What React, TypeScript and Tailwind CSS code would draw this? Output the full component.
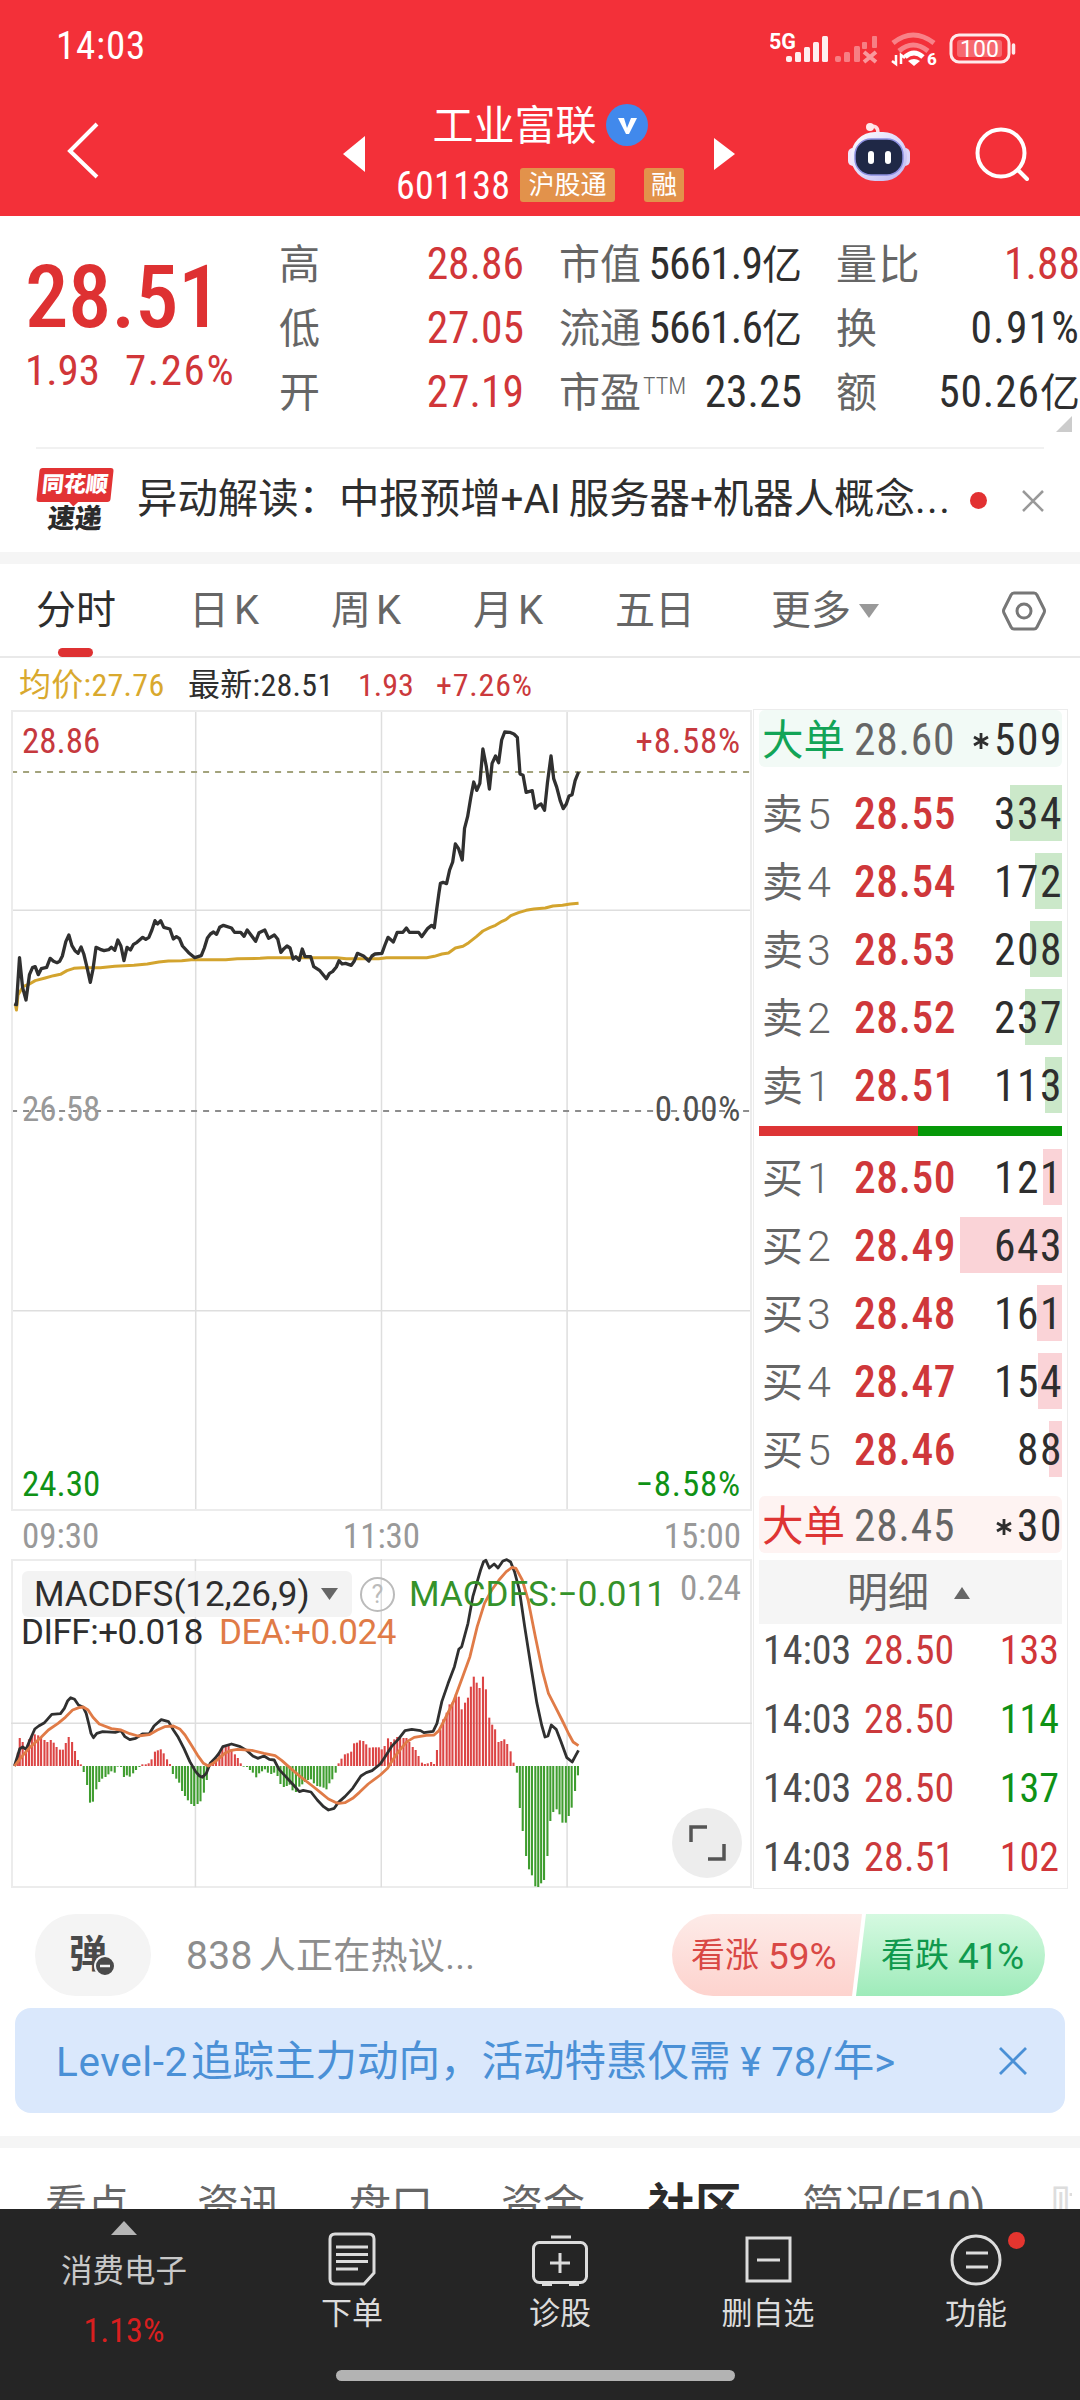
import { type ReactNode } from 'react';
import clsx from 'clsx';

type Tone = 'red' | 'green' | 'dark';

const toneClass: Record<Tone, string> = {
  red: 'text-[#d13639]',
  green: 'text-[#0f9216]',
  dark: 'text-[#2e2e2e]',
};

interface Level {
  label: string;
  price: string;
  volume: number;
  bar: number;
}

const sells: Level[] = [
  { label: '卖5', price: '28.55', volume: 334, bar: 52 },
  { label: '卖4', price: '28.54', volume: 172, bar: 27 },
  { label: '卖3', price: '28.53', volume: 208, bar: 32 },
  { label: '卖2', price: '28.52', volume: 237, bar: 37 },
  { label: '卖1', price: '28.51', volume: 113, bar: 17 },
];

const buys: Level[] = [
  { label: '买1', price: '28.50', volume: 121, bar: 19 },
  { label: '买2', price: '28.49', volume: 643, bar: 102 },
  { label: '买3', price: '28.48', volume: 161, bar: 25 },
  { label: '买4', price: '28.47', volume: 154, bar: 24 },
  { label: '买5', price: '28.46', volume: 88, bar: 13 },
];

const ticks: { price: string; volume: number; tone: Tone }[] = [
  { price: '28.50', volume: 133, tone: 'red' },
  { price: '28.50', volume: 114, tone: 'green' },
  { price: '28.50', volume: 137, tone: 'green' },
  { price: '28.51', volume: 102, tone: 'red' },
];

const priceLine =
  '37,912 43,914 51,773 59,862 68,900 77,824 85,803 92,800 100,824 108,806 122,802 131,775 140,784 149,788 156,784 163,768 172,725 180,705 188,737 196,752 204,760 212,741 219,762 227,800 236,847 243,808 251,742 262,748 272,752 284,749 291,742 300,751 308,720 316,738 324,782 332,742 341,750 349,733 358,727 373,712 381,718 389,712 397,690 405,662 412,672 420,662 428,682 444,687 453,717 461,710 469,716 477,738 493,758 509,773 526,767 534,744 542,714 550,702 558,696 566,703 574,682 584,676 605,684 613,697 629,697 638,709 646,690 654,702 668,724 677,698 692,690 702,715 717,705 726,718 734,757 742,746 750,738 758,744 766,777 773,770 782,781 790,747 797,770 812,770 820,800 836,812 853,836 861,820 869,815 879,801 886,782 894,792 903,790 918,796 926,783 934,760 950,768 964,783 972,768 980,762 998,760 1006,735 1014,712 1028,726 1038,697 1053,697 1062,684 1070,697 1094,697 1102,710 1118,685 1128,676 1135,683 1141,630 1147,580 1151,550 1158,547 1167,551 1175,510 1183,486 1190,432 1198,445 1208,480 1214,385 1222,350 1230,295 1238,246 1246,271 1254,250 1262,147 1271,200 1279,267 1286,190 1295,168 1303,188 1311,120 1319,96 1332,97 1343,102 1352,112 1359,222 1367,226 1375,277 1391,272 1399,325 1406,317 1414,312 1423,331 1431,245 1440,168 1447,236 1455,262 1464,302 1472,326 1480,312 1487,288 1495,284 1503,242 1512,216';

const averageLine =
  '40,912 43,930 47,885 60,860 77,852 92,842 118,834 140,827 158,823 175,812 193,805 215,803 262,803 300,799 350,796 385,792 415,786 440,783 475,782 500,779 590,779 620,776 680,775 700,773 840,773 880,773 905,776 990,776 1010,773 1115,773 1135,769 1155,762 1172,759 1190,744 1210,739 1225,728 1245,710 1262,693 1280,683 1295,676 1312,664 1322,659 1335,647 1355,638 1375,631 1395,627 1425,624 1445,618 1470,616 1490,612 1512,610';

const diffLine =
  '30,858 36,830 41,806 47,801 54,808 62,780 72,747 80,738 92,728 98,718 107,703 125,701 133,685 140,662 146,653 154,658 162,675 172,682 178,700 184,735 188,760 193,773 200,760 212,755 238,757 250,752 258,770 268,779 280,775 294,762 308,762 318,738 333,719 348,725 358,750 368,772 380,806 392,845 404,875 412,888 418,892 426,880 434,850 444,835 452,820 460,800 478,792 496,800 510,812 522,828 532,835 545,828 556,838 566,840 576,868 590,890 604,912 618,935 626,931 642,936 655,960 668,980 678,990 690,985 698,968 712,950 728,925 745,888 756,878 768,872 785,852 795,830 808,800 822,778 836,752 850,748 868,752 875,758 894,754 902,730 912,665 925,610 938,560 947,508 953,500 966,430 976,350 984,310 992,270 998,245 1003,241 1010,264 1020,252 1028,264 1038,243 1046,239 1054,246 1062,275 1072,330 1083,440 1096,560 1108,668 1118,735 1125,771 1131,768 1138,735 1148,748 1158,785 1170,833 1181,846 1187,830 1194,811';

const deaLine =
  '30,858 45,830 60,805 85,772 100,750 120,730 135,712 150,690 163,683 172,681 182,690 192,712 205,732 230,746 250,750 268,761 285,768 308,764 325,750 340,740 358,738 372,748 382,765 395,795 408,826 420,850 430,858 440,850 452,835 464,820 475,812 490,808 520,811 545,820 568,827 582,842 600,865 620,890 645,918 662,938 678,957 692,967 700,970 712,968 728,955 742,937 760,912 785,885 800,865 815,830 828,805 840,785 855,772 880,766 896,765 906,752 920,712 936,665 955,590 970,530 985,440 1000,370 1015,330 1030,300 1045,275 1057,262 1065,265 1078,300 1090,360 1105,470 1120,575 1132,640 1146,680 1160,720 1174,762 1183,786 1194,797';

// [x, height]: positive values are drawn upwards from the zero line
const macdBars: [number, number][] = [
  [31, 4], [37, 40], [41, 84], [47, 72], [54, 55], [60, 80], [66, 92], [72, 95], [79, 92], [85, 85], [92, 78], [98, 72], [105, 78], [111, 70],
  [117, 57], [124, 49], [130, 49], [136, 69], [142, 87], [149, 72], [155, 45], [161, 18], [167, 5], [173, -18], [180, -57],
  [186, -110], [192, -107], [199, -70], [205, -48], [211, -38], [218, -33], [224, -25], [230, -16], [237, -20], [243, -2],
  [250, -3], [256, -33], [262, -28], [268, -32], [275, -22], [281, -12], [288, -3], [294, 5], [301, 5], [307, 8], [313, 20],
  [320, 43], [326, 47], [332, 50], [338, 38], [345, 20], [351, 6], [357, -24], [364, -38], [370, -50], [376, -75],
  [382, -90], [388, -103], [395, -114], [401, -120], [408, -114], [414, -106], [421, -80], [427, -42], [434, 5], [440, 15],
  [446, 30], [453, 40], [459, 57], [466, 57], [472, 60], [478, 45], [485, 35], [491, 24], [497, 8], [503, -2], [510, -3],
  [516, -12], [522, -20], [529, -34], [535, -22], [541, -16], [547, -10], [553, -20], [560, -24], [566, -20], [573, -30],
  [579, -54], [586, -63], [592, -60], [598, -56], [604, -73], [611, -78], [618, -62], [624, -55], [630, -48], [636, -42],
  [642, -40], [648, -52], [655, -60], [661, -62], [668, -65], [674, -70], [680, -52], [686, -40], [693, -20], [699, 8],
  [705, 22], [712, 35], [718, 38], [725, 43], [731, 68], [737, 70], [743, 77], [750, 75], [756, 65], [763, 55], [770, 56],
  [776, 56], [782, 56], [788, 50], [794, 60], [801, 83], [807, 72], [814, 80], [820, 87], [826, 84], [833, 84], [839, 84],
  [845, 72], [852, 57], [858, 48], [864, 30], [871, 10], [877, 6], [883, 8], [890, 12], [896, 6], [902, 48], [909, 110],
  [915, 140], [922, 160], [928, 185], [934, 190], [941, 215], [947, 208], [953, 170], [960, 190], [966, 205], [972, 238],
  [978, 268], [984, 250], [990, 234], [997, 268], [1003, 230], [1010, 145], [1016, 124], [1022, 110], [1029, 72],
  [1035, 75], [1041, 80], [1047, 66], [1054, 44], [1060, 10], [1067, -20], [1073, -126], [1079, -195], [1086, -270],
  [1092, -310], [1098, -328], [1105, -361], [1111, -363], [1117, -352], [1123, -342], [1130, -270], [1136, -165],
  [1142, -138], [1149, -130], [1155, -145], [1161, -170], [1168, -170], [1174, -150], [1180, -125], [1187, -75], [1193, -28],
];

const StatusBar = () => (
  <div className="flex h-[92px] items-center pl-[56px] text-white">
    <span className="text-[39px] leading-none tracking-[0.8px]">14:03</span>

    <svg className="ml-auto mr-[58px] h-[44px] w-[252px] font-[Roboto]" viewBox="0 0 252 44" fill="none">
      <text x="-1" y="25" fontSize="21.500" fontWeight="700" fill="#fff">5G</text>
      <g fill="#fff" fillOpacity=".92">
        <rect x="16" y="32" width="6" height="6" rx="2" />
        <rect x="25" y="28" width="6" height="10" rx="1.5" />
        <rect x="34" y="23" width="6" height="15" rx="1.5" />
        <rect x="43" y="18" width="6" height="20" rx="1.5" />
        <rect x="52" y="12" width="6" height="26" rx="1.5" />
      </g>
      <g fill="#fff" fillOpacity=".38">
        <rect x="65" y="32" width="6" height="6" rx="2" />
        <rect x="74" y="28" width="6" height="10" rx="1.5" />
        <rect x="84" y="22" width="6" height="16" rx="1.5" />
        <rect x="92" y="18" width="5" height="7" rx="1" />
        <rect x="102" y="12" width="5" height="12" rx="1" />
      </g>
      <path d="m94 28 12 10m0-10-12 10" stroke="#fff" strokeOpacity=".5" strokeWidth="4" />
      <path d="M123 19q20-16 41 0M129 27q14-12 29 0" stroke="#fff" strokeOpacity=".4" strokeWidth="5" />
      <path d="M135 33q9-8 18 0" stroke="#fff" strokeWidth="5" />
      <path d="m138 37 6 5 6-5q-6-4-12 0Z" fill="#fff" />
      <path d="M126 31v9l-4-3M131 40v-9l4 3" stroke="#fff" strokeWidth="2.500" />
      <text x="157" y="41" fontSize="17" fontWeight="800" fill="#fff">6</text>
      <rect x="181" y="11" width="58" height="27" rx="8" stroke="#fff" strokeOpacity=".9" strokeWidth="3" />
      <rect x="187" y="16" width="45" height="17" rx="3" fill="#fff" fillOpacity=".28" />
      <path d="M243.500 21v8" stroke="#fff" strokeOpacity=".9" strokeWidth="3.500" strokeLinecap="round" />
      <text x="190" y="33" fontSize="23" fill="#fff" textLength="39">100</text>
    </svg>
  </div>
);

const Robot = () => (
  <svg className="h-[60px] w-[64px]" viewBox="0 0 64 60">
    <defs>
      <linearGradient id="shell" x1="0" y1="0" x2="1" y2="1">
        <stop offset="0" stopColor="#fff" />
        <stop offset=".55" stopColor="#dcd8fa" />
        <stop offset="1" stopColor="#b9b4f2" />
      </linearGradient>
    </defs>
    <path d="M22 5q9-3 9 6" fill="none" stroke="#ffdde3" strokeWidth="3.500" />
    <circle cx="23" cy="5" r="4" fill="#ffe9ec" />
    <rect x="1" y="26" width="10" height="18" rx="5" fill="#f3e6fa" />
    <rect x="53" y="26" width="10" height="18" rx="5" fill="#dcd5fa" />
    <rect x="4" y="10" width="56" height="49" rx="24" fill="url(#shell)" />
    <rect x="8" y="17" width="48" height="36" rx="16" fill="#1f2846" stroke="#8c8fe0" strokeWidth="1.500" />
    <rect x="21" y="29" width="6" height="13" rx="3" fill="#fff" />
    <rect x="38" y="29" width="6" height="13" rx="3" fill="#fff" />
  </svg>
);

const Header = () => (
  <header className="h-[216px] bg-[#f33039]">
    <StatusBar />

    <div className="flex h-[124px] items-center">
      <svg className="-mt-2 ml-[64px] h-[60px] w-[38px]" viewBox="0 0 38 60" fill="none" stroke="#fff" strokeWidth="4">
        <path d="M33 4 6 31l27 26" />
      </svg>
      <svg className="ml-[241px] h-[36px] w-[22px]" viewBox="0 0 22 36" fill="#fff"><path d="M22 0v36L0 18Z" /></svg>

      <div className="ml-[31px] flex h-full w-[288px] flex-col items-center pt-[11px]">
        <div className="flex h-[44px] items-center gap-[9px]">
          <h1 className="pt-[2px] text-[41px] leading-none text-white">工业富联</h1>
          <svg className="size-[42px]" viewBox="0 0 42 42">
            <circle cx="21" cy="21" r="21" fill="#4189ec" />
            <path d="m12 14 8 16h3l8-16h-6l-4 10-3-10Z" fill="#fff" />
          </svg>
        </div>
        <div className="mt-[21px] flex h-[34px] w-full items-center">
          <span className="pt-[2px] text-[38px] leading-none font-[450] tracking-[0.3px] text-white">601138</span>
          <span className="ml-auto flex h-full w-[95px] items-center justify-center rounded-[3px] bg-[#e2924b] text-[26px] leading-none text-white">沪股通</span>
          <span className="ml-[29px] flex h-full w-[40px] items-center justify-center rounded-[3px] bg-[#e2924b] text-[26px] leading-none text-white">融</span>
        </div>
      </div>

      <svg className="ml-[30px] h-[32px] w-[21px]" viewBox="0 0 21 32" fill="#fff"><path d="M0 0v32l21-16Z" /></svg>
      <div className="-mt-1 ml-[112px]"><Robot /></div>
      <svg className="ml-[64px] h-[54px] w-[56px]" viewBox="0 0 56 54" fill="none" stroke="#fff" strokeWidth="4">
        <circle cx="26" cy="26" r="23.500" />
        <path d="m43 43 9 9" strokeLinecap="round" />
      </svg>
    </div>
  </header>
);

const Stat = ({ label, children, tone = 'dark' }: { label: ReactNode; children: ReactNode; tone?: Tone }) => (
  <div className="flex h-16 items-center justify-between whitespace-nowrap">
    <span className="text-[41px] leading-none text-[#666]">{label}</span>
    <span className={clsx('text-[43.5px] leading-none font-[450]', toneClass[tone])}>{children}</span>
  </div>
);

const Yi = () => <span className="text-[40px] font-normal tracking-normal">亿</span>;

const Quote = () => (
  <section className="relative flex h-[231px] pt-[17px] pl-[25px]">
    <div className="w-[254px] pt-[21px] text-[#de3132]">
      <div className="text-[87px] leading-none font-medium tracking-[-0.4px]">28.51</div>
      <div className="mt-[8px] flex gap-[25px] text-[43px] leading-none text-[#d13639]">
        <span>1.93</span>
        <span className="tracking-[1.6px]">7.26%</span>
      </div>
    </div>

    <div className="w-[245px]">
      <Stat label="高" tone="red">28.86</Stat>
      <Stat label="低" tone="red">27.05</Stat>
      <Stat label="开" tone="red">27.19</Stat>
    </div>
    <div className="ml-[35px] w-[243px]">
      <Stat label="市值"><span className="tracking-[-0.9px]">5661.9</span><Yi /></Stat>
      <Stat label="流通"><span className="tracking-[-0.9px]">5661.6</span><Yi /></Stat>
      <Stat label={<>市盈<sup className="-top-[13px] ml-[2px] text-[24px] leading-none font-light">TTM</sup></>}>23.25</Stat>
    </div>
    <div className="ml-[34px] w-[244px]">
      <Stat label={<span className="tracking-[1.5px]">量比</span>} tone="red">1.88</Stat>
      <Stat label="换"><span className="tracking-[1.2px]">0.91%</span></Stat>
      <Stat label="额"><span className="tracking-[0.9px]">50.26</span><Yi /></Stat>
    </div>

    <svg className="absolute right-2 bottom-[15px] size-4" viewBox="0 0 16 16" fill="#ccc"><path d="M16 0v16H0Z" /></svg>
  </section>
);

const News = () => (
  <section className="relative mx-[36px] flex h-[105px] items-center border-t-2 border-[#f1f1f1]">
    <div className="flex w-[78px] flex-col items-center">
      <div className="relative flex h-[34px] w-[74px] -skew-x-6 items-center justify-center rounded-[3px] bg-[#e23334] text-[22px] leading-none font-black text-white">
        同花顺
        <span className="absolute -bottom-[3px] left-[34px] size-[7px] rotate-45 bg-[#e23334]" />
      </div>
      <div className="mt-[4px] -skew-x-6 text-[27px] leading-none font-black text-[#2b2b2b]">速递</div>
    </div>
    <p className="ml-[23px] text-[40.400px] leading-none whitespace-nowrap text-[#2e2e2e]">
      异动解读：中报预增<span className="font-[Roboto]">+AI</span><span className="ml-[8px]">服务器</span><span className="font-[Roboto]">+</span>机器人概念<span className="tracking-[1.500px]">...</span>
    </p>
    <span className="absolute left-[934px] size-[17px] rounded-full bg-[#e23132]" />
    <svg className="absolute right-0 h-[22px] w-[22px]" viewBox="0 0 22 22" stroke="#999" strokeWidth="2.500"><path d="m1 1 20 20M21 1 1 21" /></svg>
  </section>
);

const periodTabs = ['日K', '周K', '月K', '五日'];

const PeriodTabs = () => (
  <nav className="flex h-[94px] items-center border-b-2 border-[#e9e9e9] pt-[2px] pl-[36px] text-[40px] leading-none text-[#666]">
    <div className="relative flex h-full w-[153px] items-center text-[#2e2e2e]">
      分时
      <span className="absolute -bottom-px left-[22px] h-[9px] w-[35px] rounded-full bg-[#de3132]" />
    </div>
    {periodTabs.map(tab => (
      <span key={tab} className="w-[142px]">{tab[0]}<span className={clsx(tab[1] === 'K' && 'ml-[5px] font-[Roboto]')}>{tab[1]}</span></span>
    ))}
    <span className="ml-[14px]">更多</span>
    <svg className="ml-[8px] h-[14px] w-[20px]" viewBox="0 0 20 14" fill="#999"><path d="M0 0h20L10 14Z" /></svg>
    <svg className="ml-auto mr-[33px] h-[42px] w-[46px]" viewBox="0 0 46 42" fill="none" stroke="#777" strokeWidth="3">
      <path d="M13 3h20q2 0 3 2l7 14q1 2 0 4l-7 14q-1 2-3 2H13q-2 0-3-2L3 23q-1-2 0-4l7-14q1-2 3-2Z" />
      <circle cx="23" cy="21" r="7" />
    </svg>
  </nav>
);

const gridX = [511.5, 997, 1482];

const PriceChart = () => (
  <div className="relative h-[801px] w-[741px] border-2 border-[#ececec]">
    <svg className="absolute inset-0 size-full" viewBox="34 36 1926 2391" preserveAspectRatio="none" fill="none">
      <g stroke="#dedede" strokeWidth="1.500">
        {gridX.map(x => <path key={x} d={`M${x} 30V2433`} vectorEffect="non-scaling-stroke" />)}
        <path d="M29 631H1965M29 1832H1965" vectorEffect="non-scaling-stroke" />
      </g>
      <path d="M29 216H1965" stroke="#a3a37c" strokeWidth="2" strokeDasharray="6 6" vectorEffect="non-scaling-stroke" />
      <path d="M29 1233H1965" stroke="#8d8d8d" strokeWidth="2" strokeDasharray="6 6" vectorEffect="non-scaling-stroke" />
      <polyline points={averageLine} stroke="#d3a42e" strokeWidth="3" strokeLinejoin="round" vectorEffect="non-scaling-stroke" />
      <polyline points={priceLine} stroke="#303030" strokeWidth="3.300" strokeLinejoin="round" vectorEffect="non-scaling-stroke" />
    </svg>

    <div className="absolute inset-x-[9px] top-[12px] flex justify-between text-[35px] leading-none font-[450] text-[#c6393e]">
      <span>28.86</span><span className="tracking-[0.800px]">+8.58%</span>
    </div>
    <div className="absolute inset-x-[9px] top-[380px] flex justify-between text-[35px] leading-none font-[450]">
      <span className="text-[#999]">26.58</span><span className="tracking-[0.600px] text-[#505050]">0.00%</span>
    </div>
    <div className="absolute inset-x-[9px] bottom-[7px] flex justify-between text-[35px] leading-none font-[450] text-[#0f9216]">
      <span>24.30</span><span className="tracking-[0.800px]">−8.58%</span>
    </div>
  </div>
);

const MacdChart = () => (
  <div className="relative h-[329px] w-[741px] border-2 border-[#ececec]">
    <svg className="absolute inset-0 size-full overflow-visible" viewBox="27 243 1521 975" preserveAspectRatio="none" fill="none">
      <g stroke="#dedede" strokeWidth="1.500">
        <path d="M403.500 237V1222M787 237V1222M1170.500 237V1222M23 730H1552" vectorEffect="non-scaling-stroke" />
      </g>
      {macdBars.map(([x, height]) => (
        <rect
          key={x}
          x={x - 2.2}
          y={height > 0 ? 858 - height : 858}
          width={4.3}
          height={Math.abs(height)}
          fill={height > 0 ? '#dc4545' : '#3f9d2f'}
        />
      ))}
      <polyline points={diffLine} stroke="#303030" strokeWidth="2.800" strokeLinejoin="round" vectorEffect="non-scaling-stroke" />
      <polyline points={deaLine} stroke="#e07b47" strokeWidth="2.800" strokeLinejoin="round" vectorEffect="non-scaling-stroke" />
    </svg>

    <div className="absolute inset-x-[9px] top-[10px] flex h-[46px] items-center font-[Roboto] text-[35px] leading-none whitespace-nowrap">
      <div className="flex h-full w-[330px] items-center justify-between rounded-[6px] bg-[#f2f2f2]/90 pr-[14px] pl-[12px] text-[#2e2e2e]">
        MACDFS(12,26,9)
        <svg className="h-[12px] w-[17px]" viewBox="0 0 17 12" fill="#666"><path d="M0 0h17L8.500 12Z" /></svg>
      </div>
      <span className="ml-[8px] flex size-[35px] items-center justify-center rounded-full border-2 border-[#bbb] text-[25px] text-[#bbb]">?</span>
      <span className="ml-[14px] tracking-[0.100px] text-[#35922a]">MACDFS:−0.011</span>
      <span className="mb-[12px] ml-auto font-['Roboto_Condensed'] text-[#999]">0.24</span>
    </div>
    <div className="absolute top-[54px] left-[8px] flex gap-[16px] font-[Roboto] text-[35px] leading-none tracking-[-0.500px] whitespace-nowrap">
      <span className="text-[#2e2e2e]">DIFF:+0.018</span>
      <span className="text-[#e07b47]">DEA:+0.024</span>
    </div>

    <div className="absolute right-[8px] bottom-[8px] flex size-[70px] items-center justify-center rounded-full bg-[#ededed]">
      <svg className="h-[36px] w-[37px]" viewBox="0 0 37 36" fill="none" stroke="#555" strokeWidth="3.500">
        <path d="M2 17V2h16M35 19v15H19" />
      </svg>
    </div>
  </div>
);

const BigOrder = ({ tone, price, volume }: { tone: 'red' | 'green'; price: string; volume: number }) => (
  <div className={clsx('flex h-[57px] items-center rounded-[6px] pt-[4px] pl-[3px] leading-none', tone === 'green' ? 'bg-[#f2faf6]' : 'bg-[#fef3f2]')}>
    <span className={clsx('w-[92px] text-[41.500px]', tone === 'green' ? 'text-[#12a457]' : 'text-[#de3434]')}>大单</span>
    <span className="text-[43.500px] font-[450] tracking-[0.800px] text-[#666]">{price}</span>
    <span className="-mr-px ml-auto flex items-center text-[43.500px] font-[450] tracking-[1.500px] text-[#2e2e2e]">
      <svg className="mr-[5px] size-[16px]" viewBox="0 0 16 16" stroke="#2e2e2e" strokeWidth="2.800"><path d="M8 0v16M1 4l14 8M15 4 1 12" /></svg>
      {volume}
    </span>
  </div>
);

const LevelRow = ({ level, side }: { level: Level; side: 'sell' | 'buy' }) => (
  <div className="relative flex h-[68px] items-center pl-[3px] leading-none">
    <span
      className={clsx('absolute right-0 h-[56px]', side === 'sell' ? 'bg-[#cbe8c9]' : 'bg-[#fad3d7]')}
      style={{ width: level.bar }}
    />
    <span className="w-[92px] pt-[3px] text-[41px] text-[#666]">
      {level.label[0]}<span className="ml-[4px] font-[Roboto] text-[43px] font-[350]">{level.label[1]}</span>
    </span>
    <span className="pt-[3px] text-[43.500px] font-medium tracking-[0.600px] text-[#cf373a]">{level.price}</span>
    <span className="relative -mr-px ml-auto pt-[3px] text-[43.500px] font-[450] tracking-[1.500px] text-[#2e2e2e]">{level.volume}</span>
  </div>
);

const OrderBook = () => (
  <aside className="mt-[51px] ml-px flex h-[1180px] w-[315px] flex-col border border-[#ececec] px-[5px]">
    <BigOrder tone="green" price="28.60" volume={509} />
    <div className="mt-[12px]">
      {sells.map(level => <LevelRow key={level.label} level={level} side="sell" />)}
    </div>
    <div className="my-[7px] flex h-[10px]">
      <span className="w-[159px] bg-[#dd3435]" />
      <span className="flex-1 bg-[#069808]" />
    </div>
    <div>
      {buys.map(level => <LevelRow key={level.label} level={level} side="buy" />)}
    </div>
    <div className="mt-[13px]"><BigOrder tone="red" price="28.45" volume={30} /></div>

    <div className="mt-[7px] flex h-[64px] shrink-0 items-center bg-[#f5f5f5] pt-[2px] pl-[88px] text-[41px] leading-none text-[#666]">
      明细
      <svg className="ml-[25px] h-[12px] w-[16px]" viewBox="0 0 16 12" fill="#666"><path d="M0 12h16L8 0Z" /></svg>
    </div>
    <div className="mt-[7px] flex flex-col gap-[29px]">
      {ticks.map((tick, i) => (
        <div key={i} className="flex h-[40px] items-center pr-[3px] pl-[4px] text-[40px] leading-none font-[450]">
          <span className="w-[101px] text-[#4c4c4c]">14:03</span>
          <span className="tracking-[0.200px] text-[#cb393c]">{tick.price}</span>
          <span className={clsx('ml-auto', toneClass[tick.tone])}>{tick.volume}</span>
        </div>
      ))}
    </div>
  </aside>
);

const ChartPanel = () => (
  <section className="flex h-[1231px] pl-[11px]">
    <div className="w-[741px] shrink-0">
      <div className="flex h-[52px] items-center pt-[2px] pl-[8px] text-[32px] leading-none font-[450] whitespace-nowrap">
        <span className="w-[169px] tracking-[0.300px] text-[#d9a92e]"><span className="font-normal">均价</span>:27.76</span>
        <span className="w-[170px] tracking-[0.300px] text-[#2e2e2e]"><span className="font-normal">最新</span>:28.51</span>
        <span className="w-[78px] text-[#cb393c]">1.93</span>
        <span className="tracking-[0.800px] text-[#cb393c]">+7.26%</span>
      </div>
      <PriceChart />
      <div className="flex h-[48px] items-center justify-between px-[11px] pt-[3px] text-[35px] leading-none text-[#999]">
        <span>09:30</span><span>11:30</span><span>15:00</span>
      </div>
      <MacdChart />
    </div>
    <OrderBook />
  </section>
);

const Discussion = () => (
  <section className="flex h-[119px] items-center pt-[13px] pr-[35px] pl-[35px] leading-none">
    <div className="relative flex h-[82px] w-[116px] items-center justify-center rounded-full bg-[#f4f4f4] text-[38px] font-bold text-[#4a4a4a]">
      <span className="mr-[10px] mb-[3px]">弹</span>
      <svg className="absolute top-[41px] left-[59px] size-[22px]" viewBox="0 0 22 22">
        <circle cx="11" cy="11" r="10" fill="#4a4a4a" stroke="#f4f4f4" strokeWidth="2" />
        <path d="M6 11h10" stroke="#f4f4f4" strokeWidth="2.500" />
      </svg>
    </div>
    <p className="ml-[35px] pt-[2px] text-[37px] tracking-[0.300px] text-[#8d8d8d]"><span className="mr-[6px] font-[Roboto] text-[39px]">838</span>人正在热议...</p>

    <div className="ml-auto flex h-[82px] w-[373px] overflow-hidden rounded-full text-[34px] whitespace-nowrap">
      <div className="flex w-[190px] items-center gap-[9px] bg-linear-to-b from-[#fdebe8] to-[#fdd3ce] pl-[19px] text-[#d94845] [clip-path:polygon(0_0,100%_0,calc(100%-10px)_100%,0_100%)]">看涨 <span className="pt-[2px] font-[Roboto] text-[37px]">59%</span></div>
      <div className="-ml-[6px] flex flex-1 items-center gap-[9px] bg-linear-to-b from-[#d5f9e1] to-[#9eebba] pl-[25px] text-[#10994d] [clip-path:polygon(10px_0,100%_0,100%_100%,0_100%)]">看跌 <span className="pt-[2px] font-[Roboto] text-[37px] tracking-[-1.300px]">41%</span></div>
    </div>
  </section>
);

const Promo = () => (
  <section className="mx-[15px] flex h-[105px] items-center justify-between rounded-[16px] bg-[#dae8fc] pr-[38px] pl-[41px] text-[41.500px] leading-none text-[#4a90d6]">
    <p className="pt-[2px] whitespace-nowrap"><span className="mr-[3px] font-[Roboto] text-[40.500px] tracking-[0.600px]">Level-2</span>追踪主力动向，活动特惠仅需<span className="font-[Roboto] text-[40px]"> ¥ 78/</span>年<span className="font-[Roboto] text-[40px]">&gt;</span></p>
    <svg className="h-[28px] w-[28px]" viewBox="0 0 28 28" stroke="#4a90d6" strokeWidth="2.800"><path d="m1 1 26 26M27 1 1 27" /></svg>
  </section>
);

const SectionTabs = () => (
  <nav className="flex h-[61px] overflow-hidden pt-[37px] pl-[45px] text-[42px] leading-none whitespace-nowrap text-[#666]">
    <span className="w-[152px]">看点</span>
    <span className="w-[152px]">资讯</span>
    <span className="w-[152px]">盘口</span>
    <span className="w-[147px]">资金</span>
    <span className="-mt-[3px] w-[154px] text-[47px] font-bold text-[#2b2b2b]">社区</span>
    <span className="w-[248px]">简况<span className="font-[Roboto]">(F10)</span></span>
    <span className="w-[22px] overflow-hidden text-[#ddd]">财务</span>
  </nav>
);

const Action = ({ icon, label }: { icon: ReactNode; label: string }) => (
  <div className="flex w-[208px] flex-col items-center pt-[23px]">
    <svg className="h-[54px] w-[62px]" viewBox="0 0 62 54" fill="none" stroke="#dcdcdc" strokeWidth="3">{icon}</svg>
    <span className="mt-[12px] text-[31px] leading-none text-[#dcdcdc]">{label}</span>
  </div>
);

const BottomBar = () => (
  <footer className="relative flex h-[191px] bg-[#252525]">
    <div className="flex w-[248px] flex-col items-center pt-[12px]">
      <svg className="h-[14px] w-[26px]" viewBox="0 0 26 14" fill="#b5b5b5"><path d="M0 14h26L13 0Z" /></svg>
      <span className="mt-[21px] text-[31.500px] leading-none text-[#c8c8c8]">消费电子</span>
      <span className="mt-[25px] text-[34px] leading-none text-[#d91f1f]">1.13%</span>
    </div>
    <Action
      label="下单"
      icon={<><path d="M14 2h34q5 0 5 5v34L43 52H14q-5 0-5-5V7q0-5 5-5Z" /><path d="M15 15h32M15 22.500h32M15 29.500h32M15 37h22" /></>}
    />
    <Action
      label="诊股"
      icon={<><path d="M22 5h20M31 21v20M21 31h20M13 53h10M40 53h10" /><rect x="4.500" y="10.500" width="53" height="40" rx="6" /></>}
    />
    <Action label="删自选" icon={<><rect x="10" y="6" width="43" height="43" /><path d="M20 28h23" /></>} />
    <Action label="功能" icon={<><circle cx="31" cy="28" r="24" /><path d="M21 21h22M21 35h22" /></>} />
    <span className="absolute top-[23px] right-[55px] size-[17px] rounded-full bg-[#e5352f]" />
    <span className="absolute bottom-[19px] left-[336px] h-[11px] w-[399px] rounded-full bg-[#b3b3b3]" />
  </footer>
);

export default function App() {
  return (
    <main className="h-[2400px] w-[1080px] overflow-hidden bg-white font-['Roboto_Condensed','Noto_Sans_CJK_SC',sans-serif]">
      <Header />
      <Quote />
      <News />
      <div className="h-[12px] bg-[#f5f5f5]" />
      <PeriodTabs />
      <ChartPanel />
      <Discussion />
      <Promo />
      <div className="mt-[23px] h-[12px] bg-[#f5f5f5]" />
      <SectionTabs />
      <BottomBar />
    </main>
  );
}
